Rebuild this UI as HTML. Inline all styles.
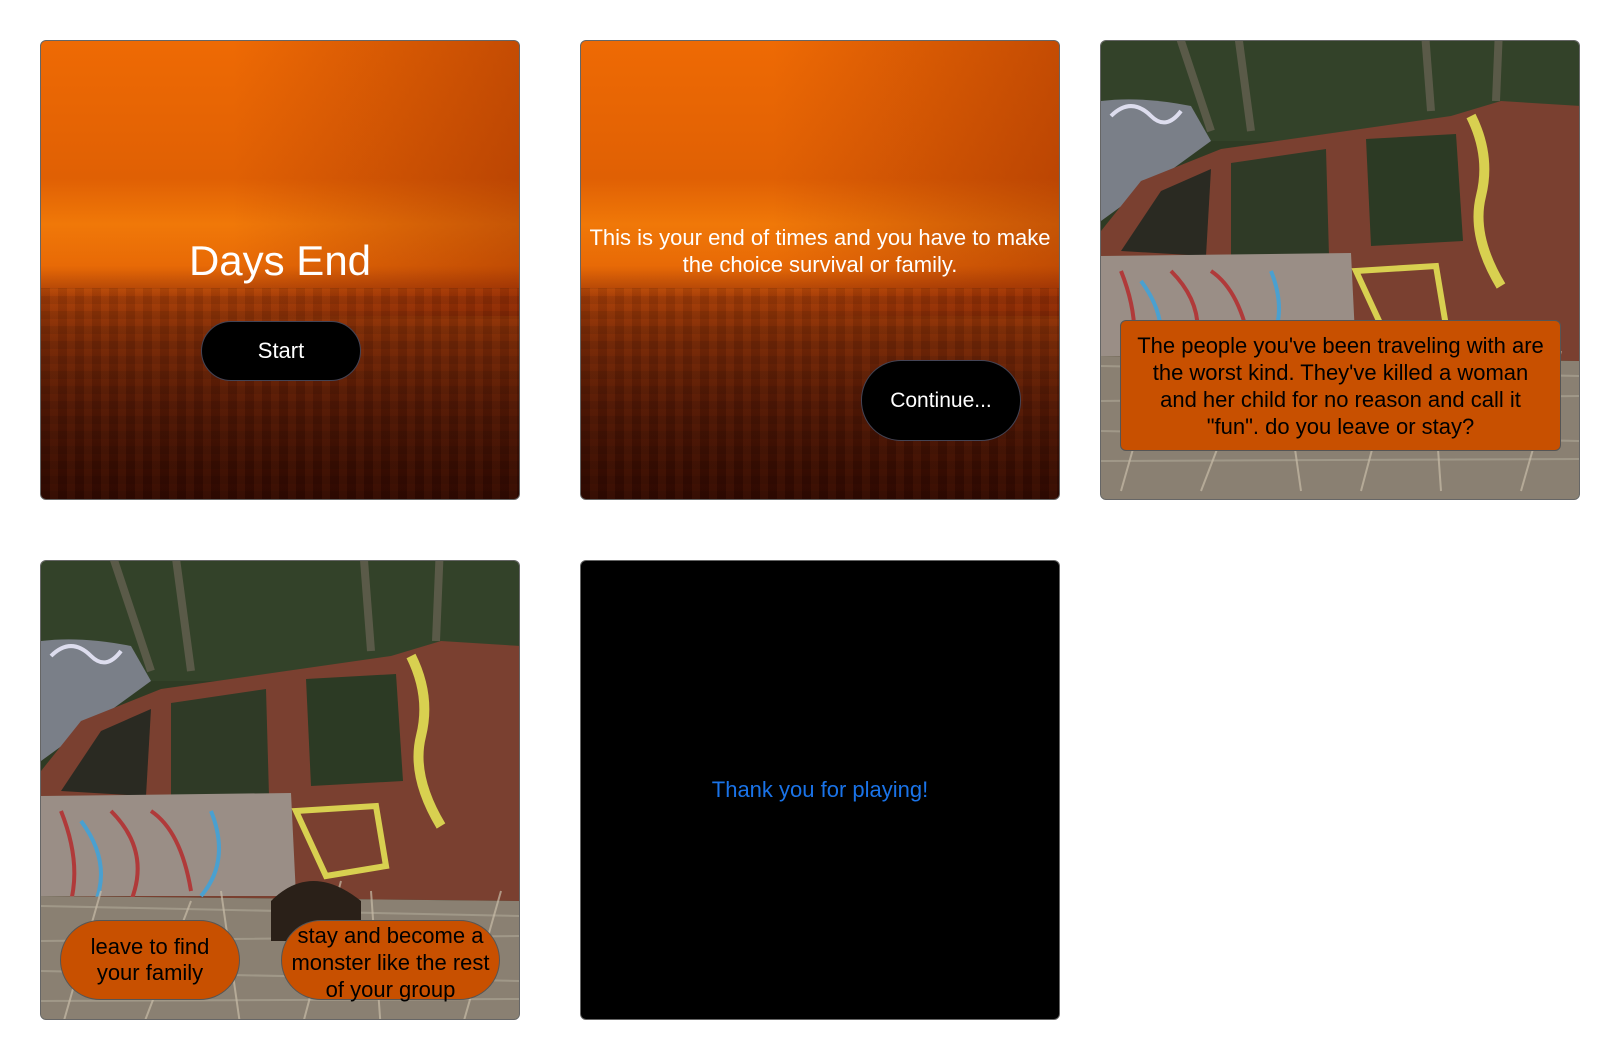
<!DOCTYPE html>
<html><head><meta charset="utf-8"><style>
*{margin:0;padding:0;box-sizing:border-box}
body{width:1620px;height:1060px;background:#fff;position:relative;overflow:hidden;font-family:"Liberation Sans",Arial,sans-serif}
.card{position:absolute;width:480px;height:460px;border:1px solid #666;border-radius:6px;overflow:hidden}
.sky{background:
 linear-gradient(180deg,rgba(0,0,0,0) 0%,rgba(0,0,0,0) 50%,rgba(60,10,0,.3) 70%,rgba(40,5,0,.7) 100%),
 linear-gradient(180deg,#ee6a04 0%,#e06004 30%,#f07808 40%,#e86a06 49%,#b04208 56%,#8a3208 65%,#6a2408 80%,#4a1604 100%);}
.sky::before{content:"";position:absolute;left:0;right:0;top:0;height:60%;background:linear-gradient(90deg,rgba(0,0,0,0) 40%,rgba(120,20,0,.35) 100%)}
.sky::after{content:"";position:absolute;left:0;right:0;top:54%;height:46%;background:repeating-linear-gradient(90deg,rgba(0,0,0,.07) 0 9px,rgba(255,140,60,.04) 9px 17px),repeating-linear-gradient(0deg,rgba(0,0,0,.08) 0 8px,rgba(0,0,0,0) 8px 15px)}
.svgbg{position:absolute;left:0;top:0}
.t{position:absolute;text-align:center;z-index:2}
.btn{position:absolute;background:#000;color:#fff;border:1px solid #445;border-radius:40px;display:flex;align-items:center;justify-content:center;font-size:21px;z-index:2}
.ob{position:absolute;background:#c85000;border:1px solid #555;color:#000;font-size:22px;line-height:26px;text-align:center;display:flex;align-items:center;justify-content:center;z-index:2}
</style></head><body>
<svg width="0" height="0" style="position:absolute"><defs>
<g id="car">
<rect x="0" y="-40" width="480" height="540" fill="#2e3b24"/>
<rect x="0" y="-40" width="480" height="160" fill="#34452a" opacity=".8"/>
<path d="M60 -40 L110 110 M130 -40 L150 110 M320 -40 L330 90 M400 -40 L395 80" stroke="#5a5a48" stroke-width="8"/>
<path d="M0 80 Q40 75 90 85 L110 120 L0 200 Z" fill="#7a7f88"/>
<path d="M10 95 q20 -20 40 0 q15 15 30 -5" stroke="#dde" stroke-width="4" fill="none"/>
<path d="M0 210 L40 160 L120 128 L350 95 L400 80 L480 85 L480 340 L0 335 Z" fill="#7a4030"/>
<path d="M20 230 L60 170 L110 148 L105 235 Z" fill="#2a2a22"/>
<path d="M130 142 L225 128 L228 235 L130 235 Z" fill="#2f3a26"/>
<path d="M265 118 L355 113 L362 220 L270 225 Z" fill="#2c3a24"/>
<path d="M0 235 L250 232 L255 335 L0 335 Z" fill="#9a8e86"/>
<path d="M20 250 q20 50 10 90 M70 250 q40 40 20 90 M110 250 q30 20 40 80" stroke="#b03a3a" stroke-width="4" fill="none"/>
<path d="M40 260 q30 40 15 80 M170 250 q20 50 -10 85" stroke="#4aa0d0" stroke-width="4" fill="none"/>
<path d="M255 250 l80 -5 l10 60 l-60 10 Z" fill="none" stroke="#d8d050" stroke-width="6"/>
<path d="M370 95 q20 40 10 80 q-10 40 20 90" stroke="#d8d050" stroke-width="10" fill="none"/>
<path d="M0 335 L480 340 L480 500 L0 500 Z" fill="#8a8072"/>
<path d="M0 345 L480 355 M0 380 L480 375 M0 410 L480 420 M0 440 L480 438" stroke="#b0a898" stroke-width="2" opacity=".6"/>
<path d="M20 470 L60 330 M100 470 L150 340 M200 470 L180 330 M260 470 L300 320 M340 470 L330 330 M420 470 L460 330" stroke="#c8bca8" stroke-width="2" opacity=".7"/>
<path d="M230 340 q40 -40 90 0 L320 380 L230 380 Z" fill="#2a2018"/>
</g></defs></svg>

<div class="card sky" style="left:40px;top:40px">
 <div class="t" style="left:0;width:478px;top:196px;font-size:42px;color:#fff">Days End</div>
 <div class="btn" style="left:160px;top:280px;width:160px;height:60px;border-radius:30px;font-size:22px">Start</div>
</div>

<div class="card sky" style="left:580px;top:40px">
 <div class="t" style="left:0;width:478px;top:183px;font-size:22px;line-height:27px;color:#fff">This is your end of times and you have to make<br>the choice survival or family.</div>
 <div class="btn" style="left:280px;top:319px;width:160px;height:81px">Continue...</div>
</div>

<div class="card" style="left:1100px;top:40px">
 <svg class="svgbg" width="480" height="460"><use href="#car" transform="translate(0,-20)"/></svg>
 <div class="ob" style="left:19px;top:279px;width:441px;height:131px;border-radius:6px;line-height:27px">The people you've been traveling with are<br>the worst kind. They've killed a woman<br>and her child for no reason and call it<br>"fun". do you leave or stay?</div>
</div>

<div class="card" style="left:40px;top:560px">
 <svg class="svgbg" width="480" height="460"><use href="#car"/></svg>
 <div class="ob" style="left:19px;top:359px;width:180px;height:80px;border-radius:40px">leave to find<br>your family</div>
 <div class="ob" style="left:240px;top:359px;width:219px;height:80px;border-radius:40px;line-height:27px;padding-top:4px">stay and become a<br>monster like the rest<br>of your group</div>
</div>

<div class="card" style="left:580px;top:560px;background:#000">
 <div class="t" style="left:0;width:478px;top:216px;font-size:22px;color:#1a73e8">Thank you for playing!</div>
</div>
</body></html>
